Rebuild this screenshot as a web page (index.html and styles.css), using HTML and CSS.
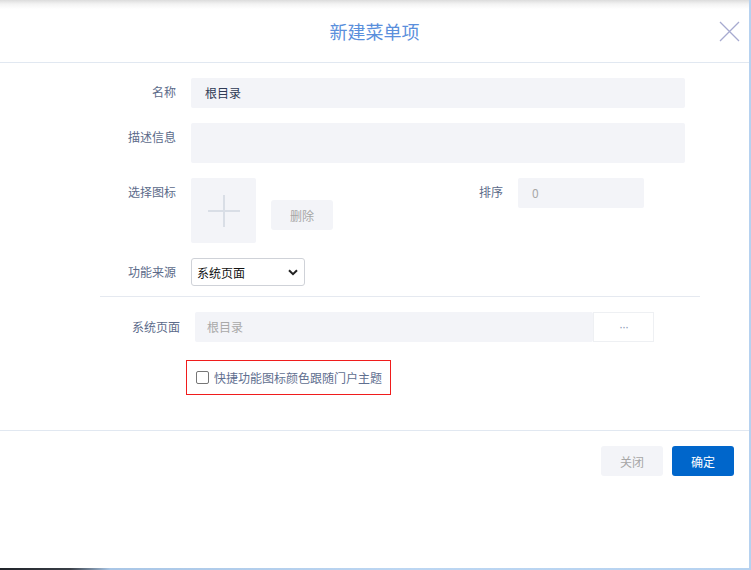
FILE: index.html
```html
<!DOCTYPE html>
<html lang="zh-CN">
<head>
<meta charset="utf-8">
<title>新建菜单项</title>
<link rel="stylesheet" href="styles.css">
</head>
<body>
<div class="dialog">
  <div class="header">
    <span></span>
    <h1 class="title">新建菜单项</h1>
    <button class="close" aria-label="关闭">
      <svg width="21" height="21" viewBox="0 0 21 21"><path d="M1 1L20 20M20 1L1 20" stroke="#a7aad0" stroke-width="1.3" fill="none"/></svg>
    </button>
  </div>
  <div class="body">
    <div class="row">
      <label class="label">名称</label>
      <div class="field field-text">根目录</div>
    </div>
    <div class="row">
      <label class="label">描述信息</label>
      <div class="field field-area"></div>
    </div>
    <div class="row">
      <label class="label">选择图标</label>
      <div class="icon-box">
        <svg width="32" height="32" viewBox="0 0 32 32"><path d="M0 16H32M16 0V32" stroke="#d9dee6" stroke-width="2" fill="none"/></svg>
      </div>
      <button class="btn-del">删除</button>
      <label class="label label-sort">排序</label>
      <div class="field field-sort">0</div>
    </div>
    <div class="row">
      <label class="label">功能来源</label>
      <div class="select">
        <span>系统页面</span>
        <svg width="10" height="7" viewBox="0 0 10 7"><path d="M1 1.2L5 5.2L9 1.2" stroke="#222" stroke-width="2" fill="none"/></svg>
      </div>
    </div>
    <div class="divider"></div>
    <div class="row row-page">
      <label class="label label-page">系统页面</label>
      <div class="field field-page">根目录</div>
      <button class="btn-more">···</button>
    </div>
    <div class="check-row">
      <label class="check-box">
        <input type="checkbox" class="check">
        <span>快捷功能图标颜色跟随门户主题</span>
      </label>
    </div>
  </div>
  <div class="footer">
    <button class="btn btn-cancel">关闭</button>
    <button class="btn btn-ok">确定</button>
  </div>
</div>
</body>
</html>
```

FILE: styles.css
```css
html, body {
  margin: 0;
  padding: 0;
}
body {
  width: 751px;
  height: 570px;
  overflow: hidden;
  background: linear-gradient(to right, #1f2329 0, #3a3f47 70px, #a9c6e6 110px, #bcd6f2 400px, #b6d2f0 751px);
  font-family: "Noto Sans CJK SC", "Noto Sans", sans-serif;
  font-size: 12px;
  color: #5c6b8a;
}
.dialog {
  width: 749px;
  height: 568px;
  background: #fff;
  display: flex;
  flex-direction: column;
}
.header {
  height: 62px;
  border-bottom: 1px solid #e1e8f1;
  background: linear-gradient(#dcdcdc 0, #f3f3f3 4px, #fff 9px);
  display: grid;
  grid-template-columns: 1fr auto 1fr;
  align-items: center;
  flex: none;
}
.title {
  margin: 0;
  font-size: 18px;
  font-weight: normal;
  color: #5a8fdc;
  line-height: 62px;
}
.close {
  justify-self: end;
  margin-right: 9px;
  margin-top: 0;
  padding: 0;
  border: 0;
  background: none;
  width: 21px;
  height: 21px;
  display: flex;
}
.body {
  height: 368px;
  padding-top: 15px;
  box-sizing: border-box;
  border-bottom: 1px solid #e1e8f1;
  flex: none;
}
.row {
  display: flex;
  align-items: flex-start;
  margin-bottom: 15px;
  padding-left: 100px;
}
.label {
  width: 76px;
  margin-right: 15px;
  text-align: right;
  line-height: 28px;
  color: #5c6b8a;
  flex: none;
}
.field {
  background: #f3f4f8;
  border-radius: 2px;
  box-sizing: border-box;
  line-height: 30px;
  padding-left: 14px;
}
.field-text {
  width: 494px;
  height: 30px;
  color: #2f3a55;
}
.field-area {
  width: 494px;
  height: 40px;
}
.icon-box {
  width: 65px;
  height: 65px;
  background: #f3f4f8;
  border-radius: 2px;
  display: flex;
  align-items: center;
  justify-content: center;
  flex: none;
}
.btn-del {
  margin-left: 15px;
  margin-top: 22px;
  width: 62px;
  height: 30px;
  border: 0;
  border-radius: 3px;
  background: #f3f4f8;
  color: #a6a6a6;
  font-family: inherit;
  font-size: 12px;
  padding: 0;
}
.label-sort {
  width: auto;
  margin-left: 146px;
}
.field-sort {
  width: 126px;
  height: 30px;
  color: #a8a8a8;
}
.select {
  width: 114px;
  height: 28px;
  box-sizing: border-box;
  border: 1px solid #cfd2d8;
  border-radius: 3px;
  display: flex;
  align-items: center;
  justify-content: space-between;
  padding: 0 6px 0 5px;
  color: #111;
  font-size: 12px;
}
.row:nth-child(4) {
  margin-bottom: 10px;
}
.divider {
  margin: 0 49px 15px 100px;
  height: 1px;
  background: #e5e9f0;
}
.row-page {
  margin-bottom: 18px;
}
.label-page {
  width: 80px;
  line-height: 30px;
}
.field-page {
  width: 398px;
  height: 30px;
  padding-left: 12px;
  color: #a9a9a9;
}
.btn-more {
  width: 61px;
  height: 30px;
  box-sizing: border-box;
  border: 1px solid #eef0f3;
  background: #fff;
  color: #8a9ab5;
  font-size: 12px;
  padding: 0;
  letter-spacing: -1px;
}
.check-row {
  padding-left: 186px;
}
.check-box {
  width: 205px;
  height: 35px;
  box-sizing: border-box;
  border: 1px solid #f01c1c;
  display: flex;
  align-items: center;
  padding-left: 9px;
  gap: 5px;
  color: #5f6f90;
}
.check {
  appearance: none;
  -webkit-appearance: none;
  margin: 0;
  width: 13px;
  height: 13px;
  border: 1px solid #767676;
  border-radius: 2px;
  background: #fff;
  flex: none;
}
.footer {
  display: flex;
  justify-content: flex-end;
  gap: 9px;
  padding: 15px 15px 0 0;
}
.btn {
  width: 62px;
  height: 30px;
  border: 0;
  border-radius: 3px;
  font-family: inherit;
  font-size: 12px;
  padding: 0;
}
.btn-cancel {
  background: #f3f4f8;
  color: #a6a6a6;
}
.btn-ok {
  background: #0066cb;
  color: #fff;
}
```
